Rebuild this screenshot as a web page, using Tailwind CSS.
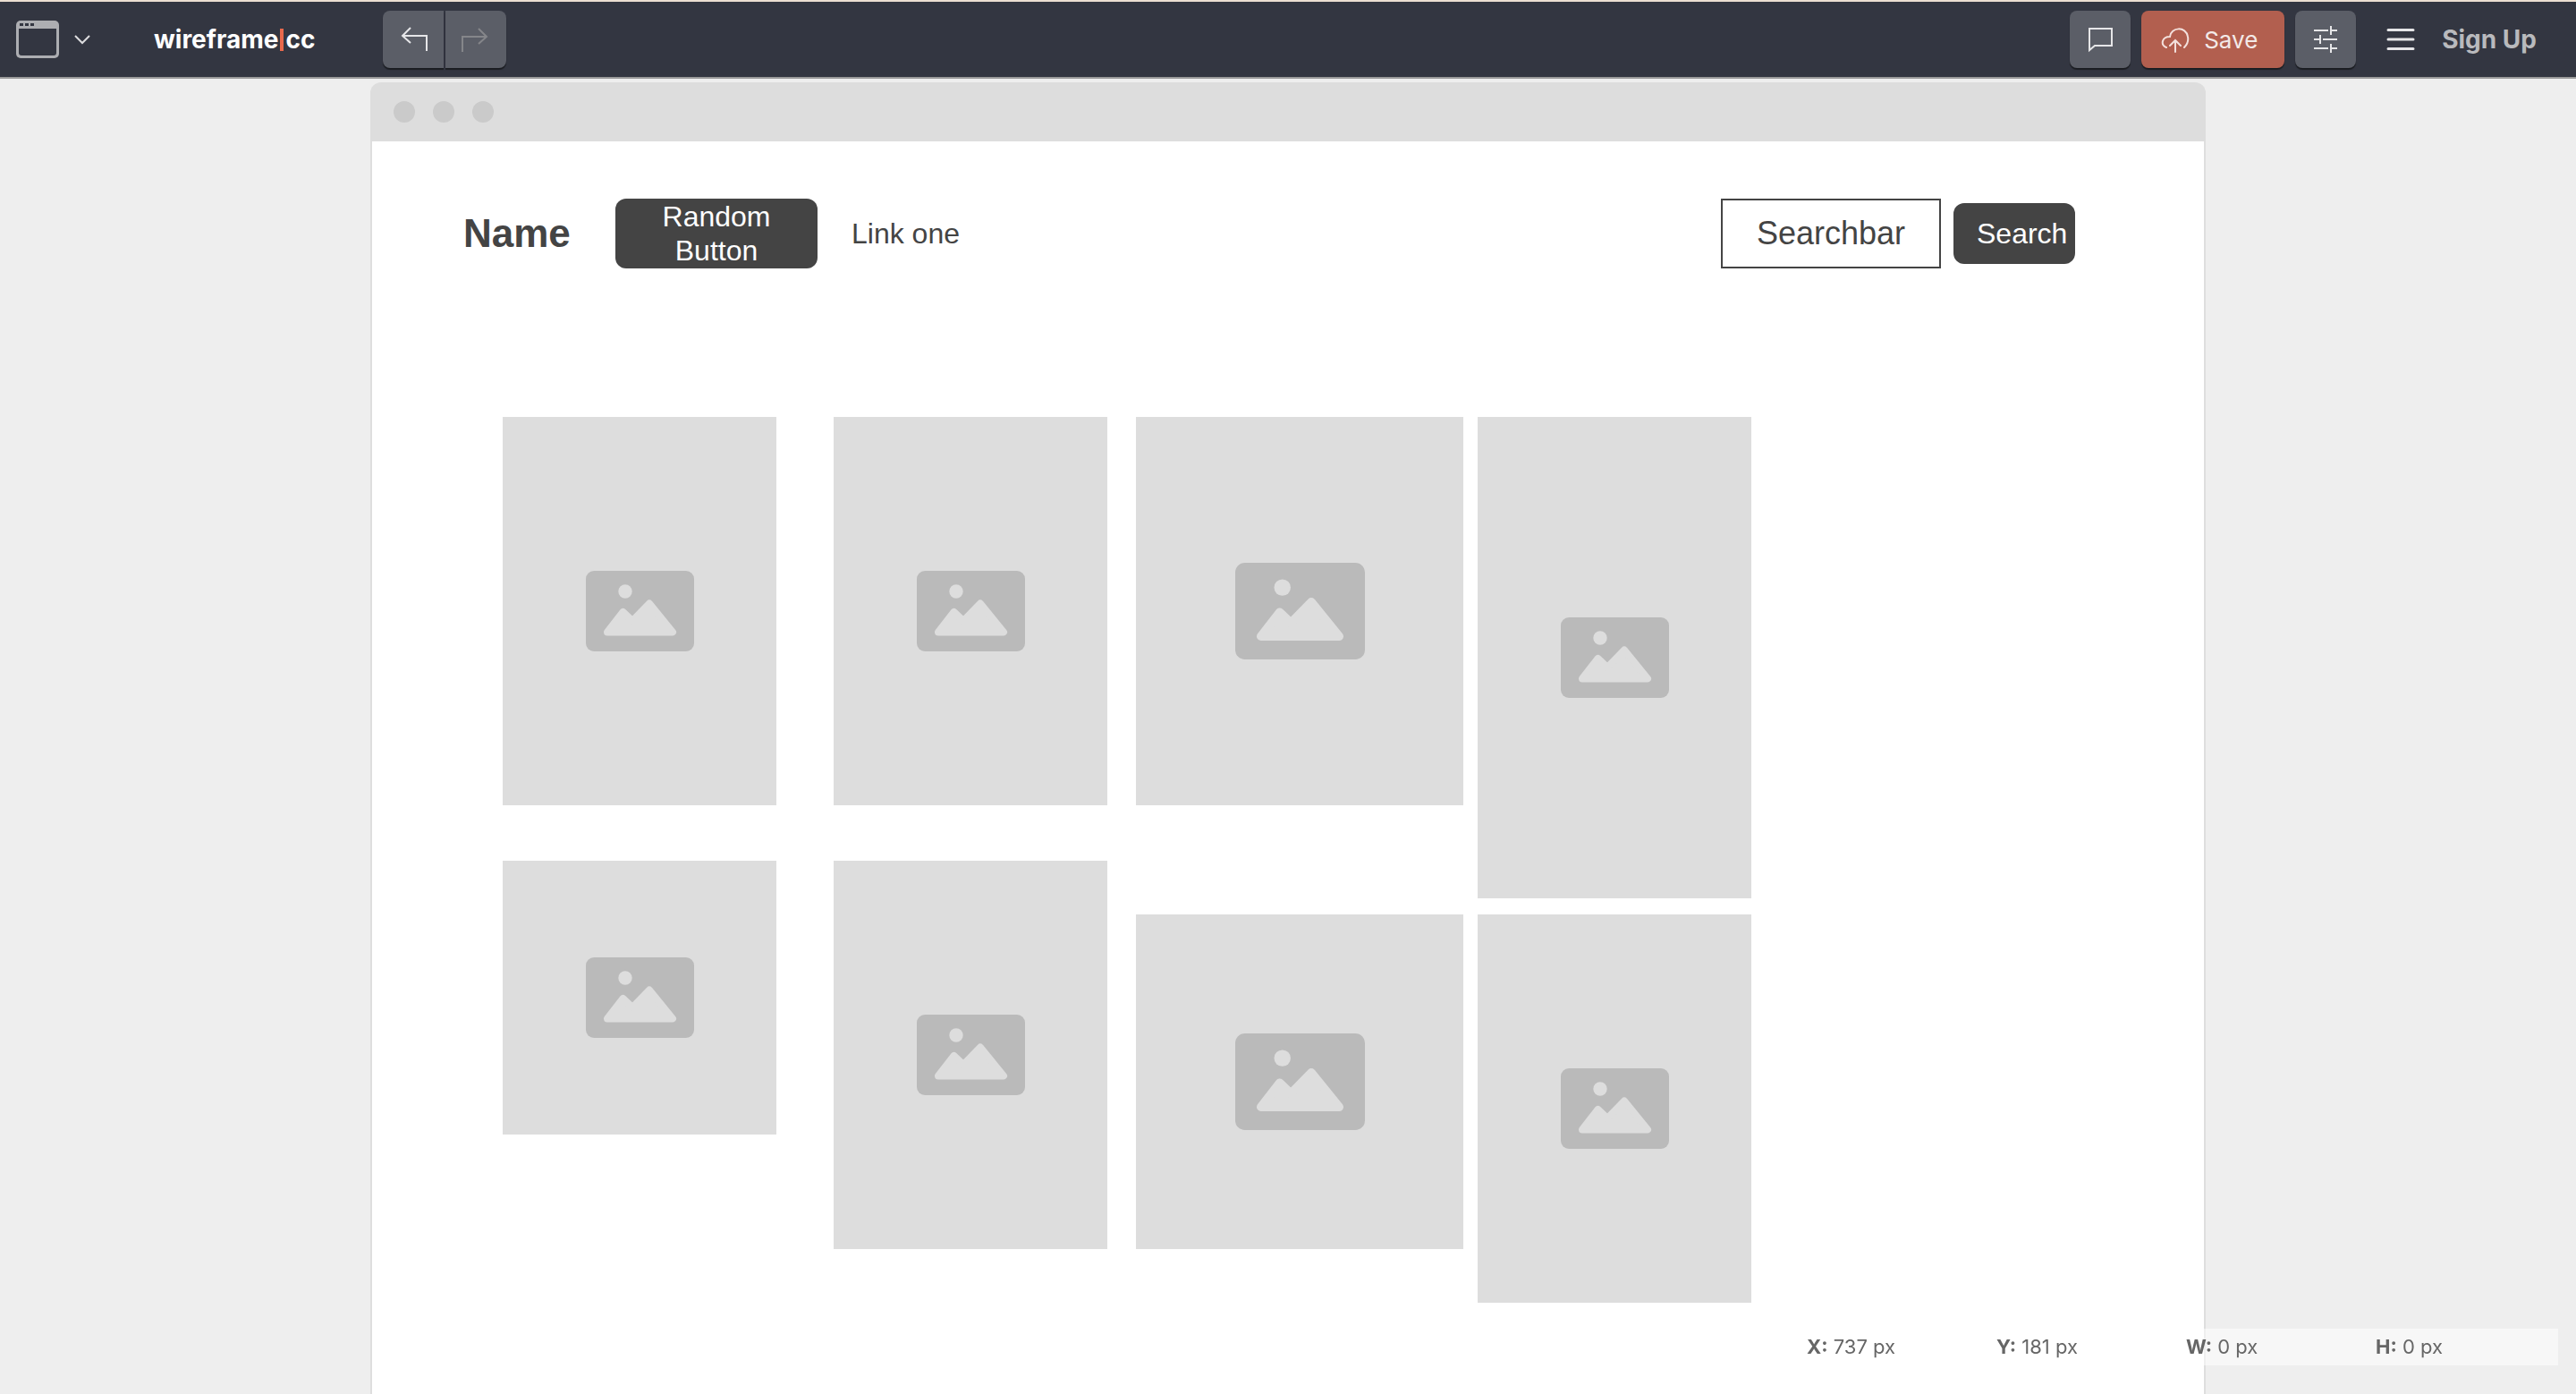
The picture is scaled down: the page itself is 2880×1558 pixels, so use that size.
<!DOCTYPE html>
<html lang="en">
<head>
<meta charset="utf-8">
<title>wireframe|cc</title>
<script src="https://cdn.jsdelivr.net/npm/@tailwindcss/browser@4"></script>
</head>
<body class="flex min-h-screen flex-col bg-[#eeeeee] font-['Liberation_Sans',sans-serif] text-[#444444]">

<svg class="hidden" aria-hidden="true">
  <symbol id="picture" viewBox="0 0 121 90">
    <rect width="121" height="90" rx="9" fill="#bababa"/>
    <circle cx="44" cy="23" r="7.7" fill="#dddddd"/>
    <path d="M24 68.500 41.500 46 52 56 71 36.500 97 68.500Z" fill="#dddddd" stroke="#dddddd" stroke-width="8" stroke-linejoin="round"/>
  </symbol>
</svg>

<header class="flex h-22 items-center border-t-2 border-b-2 border-t-[#ecdfd2] border-b-[#9a9a9a] bg-[#333641] pr-11 pl-[18px] font-['Inter',sans-serif]">
  <button class="flex items-center gap-[17px]" aria-label="Choose template">
    <svg class="h-[42px] w-12" viewBox="0 0 48 42"><rect width="48" height="42" rx="5" fill="#adaeb2"/><path d="M3 9H45V36Q45 39 42 39H6Q3 39 3 36Z" fill="#333641"/><path d="M4 3h4v3h-4zM10 3h4v3h-4zM16 3h4v3h-4z" fill="#333641"/></svg>
    <svg class="h-3 w-[18px]" viewBox="0 0 18 12" fill="none" stroke="#dcdcde" stroke-width="2"><path d="M1 2 9 10 17 2"/></svg>
  </button>
  <a href="#" class="ml-[71px] flex w-[256px] items-center text-[28px] font-bold text-white">wireframe<span class="mx-0.5 h-[25px] w-1 bg-[#e8694d]"></span>cc</a>
  <div class="flex gap-0.5">
    <button class="flex h-16 w-17 items-center justify-center rounded-l-lg bg-[#5b5e67] shadow-[0_2px_1px_#1b1d22]" aria-label="Undo">
      <svg class="h-8 w-8" viewBox="0 0 32 32" fill="none" stroke="#e6e6e8" stroke-width="2"><path d="M13 3 4 12 13 20M4 12H31V29"/></svg>
    </button>
    <button class="flex h-16 w-17 items-center justify-center rounded-r-lg bg-[#5b5e67] shadow-[0_2px_1px_#1b1d22]" aria-label="Redo">
      <svg class="h-8 w-8" viewBox="0 0 32 32" fill="none" stroke="#85868a" stroke-width="2"><path d="M19 4 28 13 19 21M28 13H1V30"/></svg>
    </button>
  </div>
  <div class="ml-auto flex items-center gap-3">
    <button class="flex h-16 w-17 items-center justify-center rounded-lg bg-[#5b5e67] shadow-[0_2px_1px_#1b1d22]" aria-label="Comments">
      <svg class="h-8 w-8" viewBox="0 0 32 32" fill="none" stroke="#e6e6e8" stroke-width="2"><path d="M4 4H29V23H10L4 28Z"/></svg>
    </button>
    <button class="flex h-16 w-40 items-center gap-4 rounded-lg bg-[#b25f4f] pl-[22px] text-[26px] text-[#f3e9e7] shadow-[0_2px_1px_#1b1d22]">
      <svg class="h-8 w-8" viewBox="0 0 32 32" fill="none" stroke="#f3e0dc" stroke-width="2" stroke-linecap="round"><path d="M6 25C-1 22 1 13 10 13C11 2 28 1 30 13C31 18 29 22 26 25M16 30V17M10 23 16 17 22 23"/></svg>Save
    </button>
    <button class="flex h-16 w-17 items-center justify-center rounded-lg bg-[#5b5e67] shadow-[0_2px_1px_#1b1d22]" aria-label="Settings">
      <svg class="h-8 w-8" viewBox="0 0 32 32" fill="none" stroke="#e6e6e8" stroke-width="2"><path d="M3 6H19M22 6H29M22 1V11M3 16H9M13 16H29M10 11V21M3 26H19M22 26H29M22 21V31"/></svg>
    </button>
    <button class="ml-[22px] flex h-8 w-8 items-center" aria-label="Menu">
      <svg class="h-8 w-8" viewBox="0 0 32 32" stroke="#e6e6e8" stroke-width="3" stroke-linecap="round"><path d="M2 5.500H30M2 16H30M2 26.500H30"/></svg>
    </button>
    <a href="#" class="ml-[18px] text-[28px] font-bold text-[#b9babd]">Sign Up</a>
  </div>
</header>

<main class="mx-auto mt-1 flex w-full max-w-[2052px] grow flex-col">
  <div class="flex h-[66px] items-center gap-5 rounded-t-xl bg-[#dddddd] pl-[26px]">
    <span class="h-6 w-6 rounded-full bg-[#cacaca]"></span>
    <span class="h-6 w-6 rounded-full bg-[#cacaca]"></span>
    <span class="h-6 w-6 rounded-full bg-[#cacaca]"></span>
  </div>
  <div class="grow border-x-2 border-[#dedede] bg-white pt-16 pb-20 pl-[102px]">
    <nav class="flex h-[78px] items-center pr-36">
      <h1 class="w-[170px] text-[44px] font-bold">Name</h1>
      <button class="h-[78px] w-[226px] rounded-xl bg-[#444444] px-10 text-[32px] leading-[38px] text-white">Random Button</button>
      <a href="#" class="ml-[38px] text-[32px]">Link one</a>
      <form class="ml-auto flex items-center gap-3.5">
        <input type="text" aria-label="Search" value="Searchbar" class="h-[78px] w-[246px] border-2 border-[#444444] bg-white text-center text-[36px]">
        <button type="button" class="h-17 w-[136px] rounded-xl bg-[#444444] pl-[26px] text-left text-[32px] text-white">Search</button>
      </form>
    </nav>
    <section class="mt-[166px] ml-11 flex items-start">
      <div class="flex w-[306px] flex-col gap-[62px]">
        <div class="flex h-[434px] items-center justify-center bg-[#dddddd]"><svg class="h-[90px] w-[121px]"><use href="#picture"/></svg></div>
        <div class="flex h-[306px] items-center justify-center bg-[#dddddd]"><svg class="h-[90px] w-[121px]"><use href="#picture"/></svg></div>
      </div>
      <div class="ml-16 flex w-[306px] flex-col gap-[62px]">
        <div class="flex h-[434px] items-center justify-center bg-[#dddddd]"><svg class="h-[90px] w-[121px]"><use href="#picture"/></svg></div>
        <div class="flex h-[434px] items-center justify-center bg-[#dddddd]"><svg class="h-[90px] w-[121px]"><use href="#picture"/></svg></div>
      </div>
      <div class="ml-8 flex w-[366px] flex-col gap-[122px]">
        <div class="flex h-[434px] items-center justify-center bg-[#dddddd]"><svg class="h-[108px] w-[145px]"><use href="#picture"/></svg></div>
        <div class="flex h-[374px] items-center justify-center bg-[#dddddd]"><svg class="h-[108px] w-[145px]"><use href="#picture"/></svg></div>
      </div>
      <div class="ml-4 flex w-[306px] flex-col gap-[18px]">
        <div class="flex h-[538px] items-center justify-center bg-[#dddddd]"><svg class="h-[90px] w-[121px]"><use href="#picture"/></svg></div>
        <div class="flex h-[434px] items-center justify-center bg-[#dddddd]"><svg class="h-[90px] w-[121px]"><use href="#picture"/></svg></div>
      </div>
    </section>
  </div>
</main>

<aside class="fixed right-5 bottom-8 grid h-[41px] w-[848px] grid-cols-4 items-center bg-white/50 font-['Inter',sans-serif] text-[22px] text-[#666666]">
  <p class="pl-2"><b>X:</b> 737 px</p>
  <p class="pl-2"><b>Y:</b> 181 px</p>
  <p class="pl-2"><b>W:</b> 0 px</p>
  <p class="pl-2"><b>H:</b> 0 px</p>
</aside>
</body>
</html>
